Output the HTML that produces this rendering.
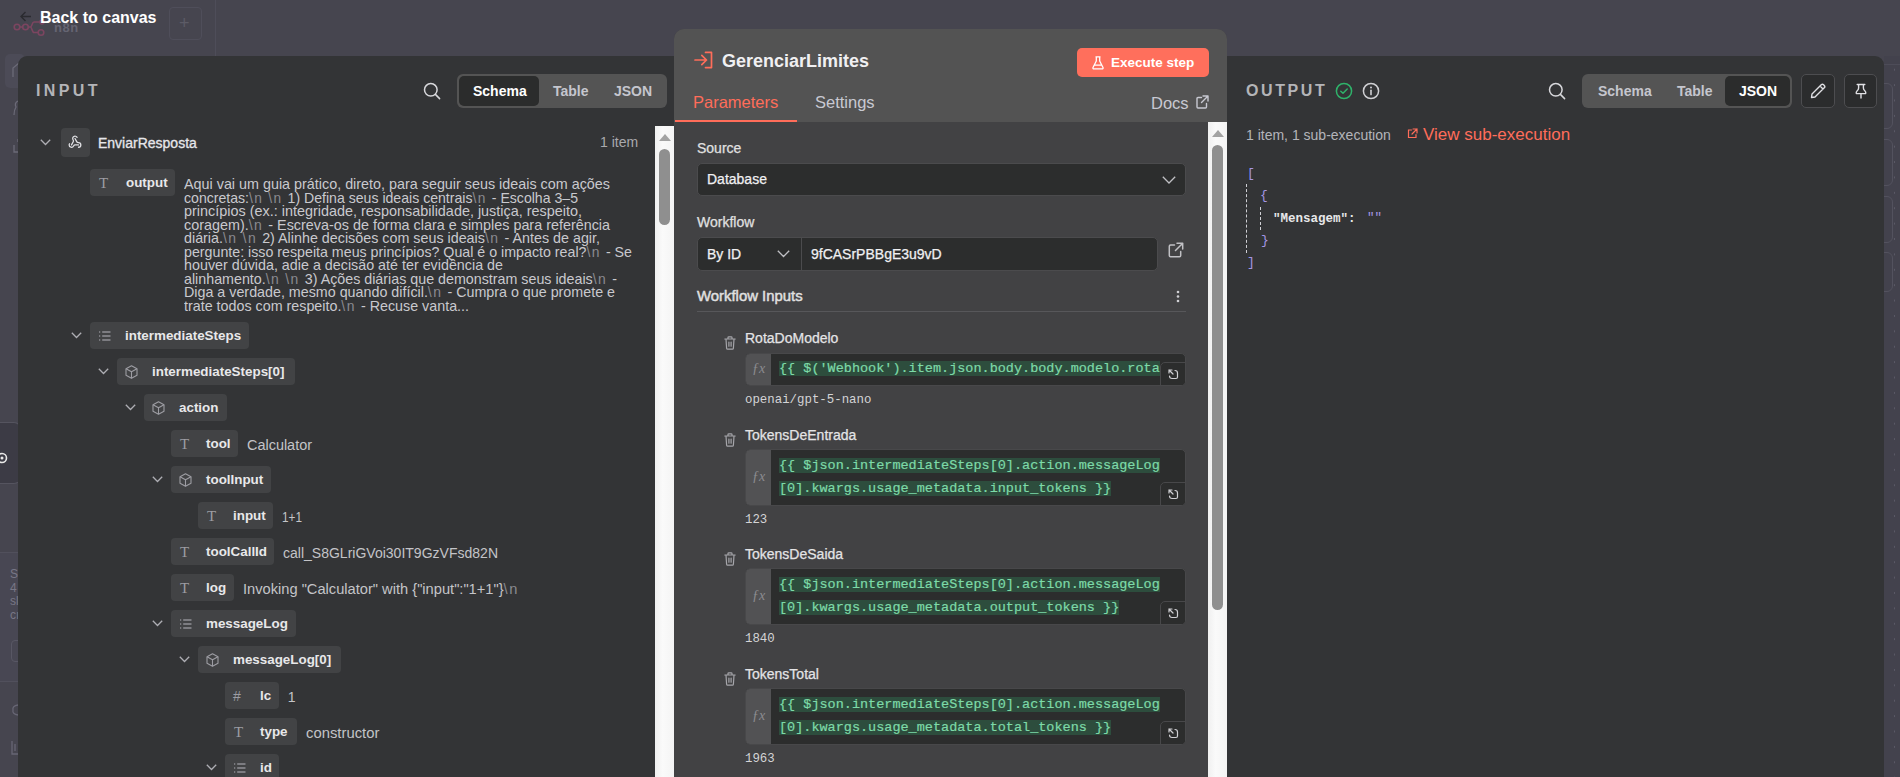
<!DOCTYPE html>
<html><head><meta charset="utf-8">
<style>
*{box-sizing:border-box;margin:0;padding:0}
html,body{width:1900px;height:777px;overflow:hidden;background:#46454f;font-family:"Liberation Sans",sans-serif;color:#e6e6e6}
.abs{position:absolute}
.t{position:absolute;white-space:pre;line-height:1}
#inp{position:absolute;left:18px;top:56px;width:656px;height:721px;background:#333436;border-top-left-radius:9px}
#out{position:absolute;left:1227px;top:56px;width:657px;height:721px;background:#333436;border-top-right-radius:9px}
#mid{position:absolute;left:674px;top:29px;width:553px;height:748px;background:#424244;border-top-left-radius:10px;border-top-right-radius:10px;overflow:hidden}
#midhead{position:absolute;left:0;top:0;width:553px;height:93px;background:#535353}
.sb{position:absolute;width:19px;background:linear-gradient(90deg,#f0f0f0,#fafafa 40%,#f4f4f4)}
.sb .arr{position:absolute;left:4px;top:8px;width:0;height:0;border-left:6px solid transparent;border-right:6px solid transparent;border-bottom:7px solid #a3a3a3}
.sb .th{position:absolute;left:4px;width:11px;background:#8f8f8f;border-radius:6px}
.seg{position:absolute;height:34px;background:#545454;border-radius:6px}
.seg .sel{position:absolute;top:2px;height:30px;background:#2b2c2c;border-radius:5px}
.seg .t{font-size:14px;color:#c5c6ce;font-weight:700}
.pill{position:absolute;height:27px;background:#424345;border-radius:4px}
.plbl{position:absolute;white-space:pre;line-height:1;font-size:13.4px;color:#e8e8ea;font-weight:700}
.val{position:absolute;white-space:pre;font-size:14px;color:#c4c4c8;line-height:1}
.nl{color:#8a8a90;letter-spacing:1.5px;font-size:14px;padding-right:1px}
.ltxt{position:absolute;left:184px;white-space:pre;font-size:14.4px;line-height:14px;color:#c9c9ce;transform-origin:0 0}
.lbl{position:absolute;white-space:pre;font-size:14px;color:#e0e0e0;line-height:1;-webkit-text-stroke:0.25px currentColor}
.inbox{position:absolute;background:#2c2d2d;border:1px solid #4b4b4d;border-radius:5px}
.expr{position:absolute;left:745px;width:441px;background:#2c2d2d;border:1px solid #48484a;border-radius:5px;overflow:hidden}
.expr .fx{position:absolute;left:-1px;top:-1px;bottom:-1px;width:26px;background:#525254}
.expr .fxt{position:absolute;left:7px;font-family:"Liberation Serif",serif;font-style:italic;font-size:14px;color:#8c8c90;line-height:1}
.expr .code{position:absolute;left:33px;top:3px;font-family:"Liberation Mono",monospace;font-size:13.5px;line-height:22.5px;color:#7ddaa8;white-space:pre;-webkit-text-stroke:0.2px #7ddaa8}
.expr .code span{background:#2d4d3d}
.expr .exp{position:absolute;right:-1px;bottom:-1px;width:26px;height:24px;border:1px solid #48484a;border-top-left-radius:5px;background:#2c2d2d}
.res{position:absolute;left:745px;font-family:"Liberation Mono",monospace;font-size:12.4px;color:#d4d4d6;white-space:pre;line-height:1}
.pname{position:absolute;left:745px;white-space:pre;font-size:14px;color:#e4e4e6;line-height:1;-webkit-text-stroke:0.25px currentColor}
</style></head><body>
<!-- TOP CANVAS BAR -->
<div class="abs" style="left:215px;top:0;width:1px;height:56px;background:#4e4d59"></div>
<div class="abs" style="left:169px;top:7px;width:33px;height:33px;border:1px solid #4f4e5a;border-radius:4px"></div>
<div class="t" style="left:179px;top:14px;font-size:18px;color:#5c5b66">+</div>
<svg class="abs" style="left:13px;top:20px" width="34" height="17" viewBox="0 0 34 17"><g fill="none" stroke="#7c4560" stroke-width="1.6"><circle cx="4" cy="7" r="2.8"/><circle cx="12.5" cy="7" r="2.8"/><circle cx="28" cy="12.5" r="2.8"/><circle cx="29" cy="2" r="2"/><path d="M6.8 7 H9.7 M15.3 7 H17.5 C19 7 19 2 21 2 H27 M17.5 7 C19 7 19 12.5 21 12.5 H25.2"/></g></svg>
<div class="t" style="left:54px;top:21px;font-size:13px;font-weight:700;color:#656472;letter-spacing:0.5px">n8n</div>
<svg class="abs" style="left:20px;top:11px" width="12" height="11" viewBox="0 0 12 11"><g fill="none" stroke="#2b2b30" stroke-width="1.4"><path d="M11 5.5 H1.5 M5.5 1 L1 5.5 L5.5 10"/></g></svg>
<div class="t" style="left:40px;top:10px;font-size:16px;font-weight:700;color:#fff">Back to canvas</div>
<!-- left sidebar faint -->
<div class="abs" style="left:0;top:422px;width:21px;height:62px;border:1px solid #55545f;border-left:none;border-radius:0 7px 7px 0;background:#3c3b45"></div>
<svg class="abs" style="left:-4px;top:452px" width="12" height="12" viewBox="0 0 12 12"><circle cx="6" cy="6" r="4.5" fill="none" stroke="#e8e8e8" stroke-width="1.6"/><circle cx="6" cy="6" r="1.5" fill="#e8e8e8"/></svg>
<!-- right faint canvas grid -->
<div class="abs" style="left:1884px;top:56px;width:16px;height:721px;background:#43424d"></div>
<div class="abs" style="left:1884px;top:64px;width:16px;height:1px;background:#4d4c58"></div>
<div class="abs" style="left:1893px;top:62px;width:3px;height:715px;background-image:radial-gradient(circle,#5a5966 0.9px,transparent 1.1px);background-size:3px 15.4px;background-position:0 0"></div>
<div class="abs" style="left:1870px;top:83px;width:23px;height:46px;border:1px solid #53525e;border-radius:6px"></div>
<div class="abs" style="left:1870px;top:139px;width:23px;height:47px;border:1px solid #53525e;border-radius:6px"></div>
<div class="abs" style="left:1870px;top:196px;width:23px;height:47px;border:1px solid #53525e;border-radius:6px"></div>
<div class="abs" style="left:1870px;top:252px;width:23px;height:40px;border:1px solid #53525e;border-radius:6px"></div>
<!-- left faint sidebar -->
<div class="abs" style="left:5px;top:54px;width:20px;height:34px;background:#4c4b57;border-radius:5px"></div>
<svg class="abs" style="left:12px;top:62px" width="8" height="16" viewBox="0 0 8 16"><path d="M1 15 V6 L7 1" fill="none" stroke="#6b6a77" stroke-width="1.3"/></svg>
<svg class="abs" style="left:13px;top:100px" width="6" height="16" viewBox="0 0 6 16"><path d="M5 1 Q1 3 3 7 Q1 10 1 15" fill="none" stroke="#6b6a77" stroke-width="1.3"/></svg>
<svg class="abs" style="left:13px;top:137px" width="6" height="16" viewBox="0 0 6 16"><path d="M5 2 V5 M1 8 V15 H6" fill="none" stroke="#6b6a77" stroke-width="1.3"/></svg>
<div class="abs" style="left:0;top:552px;width:18px;height:1px;background:#51505c"></div>
<div class="abs" style="left:0;top:553px;width:18px;height:128px;background:#484753"></div>
<div class="t" style="left:10px;top:568px;font-size:12px;line-height:13.7px;color:#787786">S<br>4<br>sl<br>cı</div>
<div class="abs" style="left:11px;top:640px;width:12px;height:22px;border:1px solid #585764;border-radius:4px"></div>
<div class="abs" style="left:0;top:681px;width:18px;height:1px;background:#51505c"></div>
<svg class="abs" style="left:11px;top:703px" width="8" height="14" viewBox="0 0 8 14"><path d="M7 2 Q1 3 2 7 Q1 11 7 12" fill="none" stroke="#676674" stroke-width="1.3"/></svg>
<svg class="abs" style="left:11px;top:740px" width="8" height="16" viewBox="0 0 8 16"><path d="M1 1 V14 H8 M4 4 V11" fill="none" stroke="#676674" stroke-width="1.3"/></svg>

<!-- INPUT PANEL -->
<div id="inp"></div>
<div class="t" style="left:36px;top:83px;font-size:16px;font-weight:700;color:#b4b4b8;letter-spacing:3.4px">INPUT</div>
<svg class="abs" style="left:423px;top:82px" width="18" height="18" viewBox="0 0 18 18"><g fill="none" stroke="#d8d8dc" stroke-width="1.5"><circle cx="7.8" cy="7.8" r="6.3"/><path d="M12.4 12.4 L16.6 16.6" stroke-linecap="round"/></g></svg>
<div class="seg" style="left:457px;top:74px;width:210px">
  <div class="sel" style="left:2px;width:80px"></div>
  <div class="t" style="left:16px;top:9.5px;color:#fff">Schema</div>
  <div class="t" style="left:96px;top:9.5px">Table</div>
  <div class="t" style="left:157px;top:9.5px">JSON</div>
</div>
<div class="val" style="left:600px;top:135px;color:#a9a9ad">1 item</div>

<svg class="abs" style="left:40px;top:139px" width="11" height="7" viewBox="0 0 11 7"><polyline points="0.8,0.8 5.5,5.5 10.2,0.8" fill="none" stroke="#aeaeb4" stroke-width="1.3"/></svg>
<div class="abs" style="left:61px;top:128px;width:29px;height:29px;background:#424345;border-radius:4px"></div>
<svg class="abs" style="left:68px;top:135px" width="14" height="14" viewBox="0 0 24 24"><g fill="none" stroke="#e0e0e4" stroke-width="2.2" stroke-linecap="round" stroke-linejoin="round"><path d="M18 16.98h-5.99c-1.1 0-1.95.94-2.48 1.9A4 4 0 0 1 2 17c.01-.7.2-1.4.57-2"/><path d="m6 17 3.13-5.78c.53-.97.1-2.18-.5-3.1a4 4 0 1 1 6.89-4.06"/><path d="m12 6 3.13 5.73C15.66 12.7 16.9 13 18 13a4 4 0 0 1 0 8"/></g></svg>
<div class="t" style="left:98px;top:135.5px;font-size:14px;color:#e6e6ea;-webkit-text-stroke:0.3px #e6e6ea">EnviarResposta</div>

<div class="pill" style="left:90px;top:169px;width:85px"></div>
<div class="t" style="left:99px;top:176px;font-family:'Liberation Serif',serif;font-size:15px;color:#9d9da3">T</div>
<div class="plbl" style="left:126px;top:176px">output</div>
<div class="ltxt" style="transform:scaleX(0.9973);top:177.0px">Aqui vai um guia prático, direto, para seguir seus ideais com ações</div>
<div class="ltxt" style="transform:scaleX(0.9795);top:190.5px">concretas:<span class="nl">\n</span> <span class="nl">\n</span> 1) Defina seus ideais centrais<span class="nl">\n</span> - Escolha 3–5</div>
<div class="ltxt" style="transform:scaleX(1.0011);top:204.0px">princípios (ex.: integridade, responsabilidade, justiça, respeito,</div>
<div class="ltxt" style="transform:scaleX(0.9982);top:217.5px">coragem).<span class="nl">\n</span> - Escreva-os de forma clara e simples para referência</div>
<div class="ltxt" style="transform:scaleX(0.9946);top:231.0px">diária.<span class="nl">\n</span> <span class="nl">\n</span> 2) Alinhe decisões com seus ideais<span class="nl">\n</span> - Antes de agir,</div>
<div class="ltxt" style="transform:scaleX(0.9885);top:244.5px">pergunte: isso respeita meus princípios? Qual é o impacto real?<span class="nl">\n</span> - Se</div>
<div class="ltxt" style="transform:scaleX(0.9944);top:258.0px">houver dúvida, adie a decisão até ter evidência de</div>
<div class="ltxt" style="transform:scaleX(0.9917);top:271.5px">alinhamento.<span class="nl">\n</span> <span class="nl">\n</span> 3) Ações diárias que demonstram seus ideais<span class="nl">\n</span> -</div>
<div class="ltxt" style="transform:scaleX(0.9930);top:285.0px">Diga a verdade, mesmo quando difícil.<span class="nl">\n</span> - Cumpra o que promete e</div>
<div class="ltxt" style="transform:scaleX(0.9936);top:298.5px">trate todos com respeito.<span class="nl">\n</span> - Recuse vanta...</div>

<svg class="abs" style="left:71px;top:332px" width="11" height="7" viewBox="0 0 11 7"><polyline points="0.8,0.8 5.5,5.5 10.2,0.8" fill="none" stroke="#aeaeb4" stroke-width="1.3"/></svg>
<div class="pill" style="left:90px;top:322px;width:159px"></div>
<svg class="abs" style="left:99px;top:331px" width="12" height="10" viewBox="0 0 12 10"><g stroke="#9d9da3" stroke-width="1.3"><line x1="3.2" y1="1" x2="11.5" y2="1"/><line x1="3.2" y1="5" x2="11.5" y2="5"/><line x1="3.2" y1="9" x2="11.5" y2="9"/><line x1="0.2" y1="1" x2="1.2" y2="1"/><line x1="0.2" y1="5" x2="1.2" y2="5"/><line x1="0.2" y1="9" x2="1.2" y2="9"/></g></svg>
<div class="plbl" style="left:125px;top:329px">intermediateSteps</div>
<svg class="abs" style="left:98px;top:368px" width="11" height="7" viewBox="0 0 11 7"><polyline points="0.8,0.8 5.5,5.5 10.2,0.8" fill="none" stroke="#aeaeb4" stroke-width="1.3"/></svg>
<div class="pill" style="left:117px;top:358px;width:178px"></div>
<svg class="abs" style="left:125px;top:365px" width="13" height="14" viewBox="0 0 13 14"><g fill="none" stroke="#9d9da3" stroke-width="1.1" stroke-linejoin="round"><path d="M6.5 0.8 L12 3.8 V10.2 L6.5 13.2 L1 10.2 V3.8 Z"/><path d="M1 3.8 L6.5 6.8 L12 3.8 M6.5 6.8 V13.2"/></g></svg>
<div class="plbl" style="left:152px;top:365px">intermediateSteps[0]</div>
<svg class="abs" style="left:125px;top:404px" width="11" height="7" viewBox="0 0 11 7"><polyline points="0.8,0.8 5.5,5.5 10.2,0.8" fill="none" stroke="#aeaeb4" stroke-width="1.3"/></svg>
<div class="pill" style="left:144px;top:394px;width:83px"></div>
<svg class="abs" style="left:152px;top:401px" width="13" height="14" viewBox="0 0 13 14"><g fill="none" stroke="#9d9da3" stroke-width="1.1" stroke-linejoin="round"><path d="M6.5 0.8 L12 3.8 V10.2 L6.5 13.2 L1 10.2 V3.8 Z"/><path d="M1 3.8 L6.5 6.8 L12 3.8 M6.5 6.8 V13.2"/></g></svg>
<div class="plbl" style="left:179px;top:401px">action</div>
<div class="pill" style="left:171px;top:430px;width:67px"></div>
<div class="t" style="left:180px;top:437px;font-family:'Liberation Serif',serif;font-size:15px;color:#9d9da3">T</div>
<div class="plbl" style="left:206px;top:437px">tool</div>
<div class="val" style="transform:scaleX(1.0312);transform-origin:0 0;left:246.8px;top:438.2px;">Calculator</div>
<svg class="abs" style="left:152px;top:476px" width="11" height="7" viewBox="0 0 11 7"><polyline points="0.8,0.8 5.5,5.5 10.2,0.8" fill="none" stroke="#aeaeb4" stroke-width="1.3"/></svg>
<div class="pill" style="left:171px;top:466px;width:100px"></div>
<svg class="abs" style="left:179px;top:473px" width="13" height="14" viewBox="0 0 13 14"><g fill="none" stroke="#9d9da3" stroke-width="1.1" stroke-linejoin="round"><path d="M6.5 0.8 L12 3.8 V10.2 L6.5 13.2 L1 10.2 V3.8 Z"/><path d="M1 3.8 L6.5 6.8 L12 3.8 M6.5 6.8 V13.2"/></g></svg>
<div class="plbl" style="left:206px;top:473px">toolInput</div>
<div class="pill" style="left:198px;top:502px;width:75px"></div>
<div class="t" style="left:207px;top:509px;font-family:'Liberation Serif',serif;font-size:15px;color:#9d9da3">T</div>
<div class="plbl" style="left:233px;top:509px">input</div>
<div class="val" style="transform:scaleX(0.8421);transform-origin:0 0;left:281.8px;top:510.2px;">1+1</div>
<div class="pill" style="left:171px;top:538px;width:103px"></div>
<div class="t" style="left:180px;top:545px;font-family:'Liberation Serif',serif;font-size:15px;color:#9d9da3">T</div>
<div class="plbl" style="left:206px;top:545px">toolCallId</div>
<div class="val" style="transform:scaleX(1.0011);transform-origin:0 0;left:282.8px;top:546.2px;">call_S8GLriGVoi30IT9GzVFsd82N</div>
<div class="pill" style="left:171px;top:574px;width:63px"></div>
<div class="t" style="left:180px;top:581px;font-family:'Liberation Serif',serif;font-size:15px;color:#9d9da3">T</div>
<div class="plbl" style="left:206px;top:581px">log</div>
<div class="val" style="transform:scaleX(1.0469);transform-origin:0 0;left:242.8px;top:582.2px;">Invoking "Calculator" with {"input":"1+1"}<span class="nl">\n</span></div>
<svg class="abs" style="left:152px;top:620px" width="11" height="7" viewBox="0 0 11 7"><polyline points="0.8,0.8 5.5,5.5 10.2,0.8" fill="none" stroke="#aeaeb4" stroke-width="1.3"/></svg>
<div class="pill" style="left:171px;top:610px;width:125px"></div>
<svg class="abs" style="left:180px;top:619px" width="12" height="10" viewBox="0 0 12 10"><g stroke="#9d9da3" stroke-width="1.3"><line x1="3.2" y1="1" x2="11.5" y2="1"/><line x1="3.2" y1="5" x2="11.5" y2="5"/><line x1="3.2" y1="9" x2="11.5" y2="9"/><line x1="0.2" y1="1" x2="1.2" y2="1"/><line x1="0.2" y1="5" x2="1.2" y2="5"/><line x1="0.2" y1="9" x2="1.2" y2="9"/></g></svg>
<div class="plbl" style="left:206px;top:617px">messageLog</div>
<svg class="abs" style="left:179px;top:656px" width="11" height="7" viewBox="0 0 11 7"><polyline points="0.8,0.8 5.5,5.5 10.2,0.8" fill="none" stroke="#aeaeb4" stroke-width="1.3"/></svg>
<div class="pill" style="left:198px;top:646px;width:143px"></div>
<svg class="abs" style="left:206px;top:653px" width="13" height="14" viewBox="0 0 13 14"><g fill="none" stroke="#9d9da3" stroke-width="1.1" stroke-linejoin="round"><path d="M6.5 0.8 L12 3.8 V10.2 L6.5 13.2 L1 10.2 V3.8 Z"/><path d="M1 3.8 L6.5 6.8 L12 3.8 M6.5 6.8 V13.2"/></g></svg>
<div class="plbl" style="left:233px;top:653px">messageLog[0]</div>
<div class="pill" style="left:225px;top:682px;width:54px"></div>
<div class="t" style="left:233px;top:689px;font-size:14px;color:#9d9da3">#</div>
<div class="plbl" style="left:260px;top:689px">lc</div>
<div class="val" style="left:287.8px;top:690.2px;">1</div>
<div class="pill" style="left:225px;top:718px;width:72px"></div>
<div class="t" style="left:234px;top:725px;font-family:'Liberation Serif',serif;font-size:15px;color:#9d9da3">T</div>
<div class="plbl" style="left:260px;top:725px">type</div>
<div class="val" style="transform:scaleX(1.0599);transform-origin:0 0;left:305.8px;top:726.2px;">constructor</div>
<svg class="abs" style="left:206px;top:764px" width="11" height="7" viewBox="0 0 11 7"><polyline points="0.8,0.8 5.5,5.5 10.2,0.8" fill="none" stroke="#aeaeb4" stroke-width="1.3"/></svg>
<div class="pill" style="left:225px;top:754px;width:54px"></div>
<svg class="abs" style="left:234px;top:763px" width="12" height="10" viewBox="0 0 12 10"><g stroke="#9d9da3" stroke-width="1.3"><line x1="3.2" y1="1" x2="11.5" y2="1"/><line x1="3.2" y1="5" x2="11.5" y2="5"/><line x1="3.2" y1="9" x2="11.5" y2="9"/><line x1="0.2" y1="1" x2="1.2" y2="1"/><line x1="0.2" y1="5" x2="1.2" y2="5"/><line x1="0.2" y1="9" x2="1.2" y2="9"/></g></svg>
<div class="plbl" style="left:260px;top:761px">id</div>

<div class="sb" style="left:655px;top:126px;height:651px"><div class="arr"></div><div class="th" style="top:23px;height:76px"></div></div>

<!-- MIDDLE PANEL -->
<div id="mid"><div id="midhead"></div>
  <div style="position:absolute;left:1px;top:91px;width:122px;height:2px;background:#ff6d5a"></div>
</div>
<svg class="abs" style="left:694px;top:51px" width="19" height="18" viewBox="0 0 19 18"><g fill="none" stroke="#ff6d5a" stroke-width="1.7" stroke-linecap="round" stroke-linejoin="round"><path d="M1 9 H12.5 M7.8 4.4 L12.5 9 L7.8 13.6 M11.5 1.4 H17.5 V16.6 H11.5"/></g></svg>
<div class="t" style="left:722px;top:52px;font-size:18px;font-weight:700;color:#f0f0f2">GerenciarLimites</div>
<div class="abs" style="left:1077px;top:48px;width:132px;height:29px;background:#ff6f5c;border-radius:5px"></div>
<svg class="abs" style="left:1092px;top:56px" width="12" height="14" viewBox="0 0 12 14"><g fill="none" stroke="#fff" stroke-width="1.3" stroke-linejoin="round"><path d="M3.5 0.8 H8.5 M4.3 0.8 V5 L1 11.5 Q0.6 12.9 2 12.9 H10 Q11.4 12.9 11 11.5 L7.7 5 V0.8 M2.2 9.2 H9.8"/></g></svg>
<div class="t" style="left:1111px;top:55.5px;font-size:13.5px;font-weight:700;color:#fff">Execute step</div>
<div class="t" style="left:693px;top:94px;font-size:16.5px;color:#ff6d5a">Parameters</div>
<div class="t" style="left:815px;top:94px;font-size:16.5px;color:#c8c9d2">Settings</div>
<div class="t" style="left:1151px;top:95px;font-size:16.5px;color:#c8c9d2">Docs</div>
<svg class="abs" style="left:1196px;top:95px" width="13" height="14" viewBox="0 0 13 14"><g fill="none" stroke="#c8c9d2" stroke-width="1.4" stroke-linecap="round" stroke-linejoin="round"><path d="M5.5 2.5 H2 Q1 2.5 1 3.5 V12 Q1 13 2 13 H9.5 Q10.5 13 10.5 12 V8.5 M7 1 H12 V6 M12 1 L5.5 7.5"/></g></svg>

<div class="lbl" style="left:697px;top:141px">Source</div>
<div class="inbox" style="left:697px;top:163px;width:489px;height:33px"></div>
<div class="lbl" style="left:707px;top:172px;color:#f0f0f2">Database</div>
<svg class="abs" style="left:1162px;top:176px" width="14" height="8" viewBox="0 0 14 8"><polyline points="0.8,0.8 7,7 13.2,0.8" fill="none" stroke="#c0c0c4" stroke-width="1.3"/></svg>

<div class="lbl" style="left:697px;top:215px">Workflow</div>
<div class="inbox" style="left:697px;top:237px;width:461px;height:34px"></div>
<div class="abs" style="left:801px;top:238px;width:1px;height:32px;background:#4b4b4d"></div>
<div class="lbl" style="left:707px;top:247px;color:#f0f0f2">By ID</div>
<svg class="abs" style="left:777px;top:250px" width="13" height="8" viewBox="0 0 13 8"><polyline points="0.8,0.8 6.5,6.5 12.2,0.8" fill="none" stroke="#c0c0c4" stroke-width="1.3"/></svg>
<div class="lbl" style="left:811px;top:247px;color:#f0f0f2">9fCASrPBBgE3u9vD</div>
<svg class="abs" style="left:1168px;top:242px" width="16" height="16" viewBox="0 0 16 16"><g fill="none" stroke="#c0c0c4" stroke-width="1.5" stroke-linecap="round" stroke-linejoin="round"><path d="M6.5 3 H2.5 Q1.3 3 1.3 4.2 V13.5 Q1.3 14.7 2.5 14.7 H11.5 Q12.7 14.7 12.7 13.5 V9.5 M9 1.3 H14.7 V7 M14.7 1.3 L7.5 8.5"/></g></svg>

<div class="lbl" style="left:697px;top:289px;font-size:14.9px;-webkit-text-stroke:0.45px #e0e0e0">Workflow Inputs</div>
<svg class="abs" style="left:1176px;top:290px" width="4" height="13" viewBox="0 0 4 13"><g fill="#d0d0d4"><circle cx="2" cy="2" r="1.3"/><circle cx="2" cy="6.5" r="1.3"/><circle cx="2" cy="11" r="1.3"/></g></svg>
<div class="abs" style="left:697px;top:311px;width:489px;height:1px;background:#57575a"></div>

<svg class="abs" style="left:724px;top:336px" width="12" height="14" viewBox="0 0 12 14"><g fill="none" stroke="#a5a5aa" stroke-width="1.2" stroke-linejoin="round" stroke-linecap="round"><path d="M0.8 3 H11.2 M4 3 V1.6 Q4 0.8 4.8 0.8 H7.2 Q8 0.8 8 1.6 V3 M2 3 L2.6 12.2 Q2.7 13.2 3.6 13.2 H8.4 Q9.3 13.2 9.4 12.2 L10 3 M4.9 6 V10.2 M7.1 6 V10.2"/></g></svg>
<div class="pname" style="top:331px">RotaDoModelo</div>
<div class="expr" style="top:353px;height:33px"><div class="fx"><div class="fxt" style="top:9px">ƒx</div></div>
<div class="code" style="top:4px"><span>{{ $('Webhook').item.json.body.body.modelo.rota</span></div>
<div class="exp"></div></div>
<svg class="abs" style="left:1168px;top:369px" width="11" height="11" viewBox="0 0 11 11"><g fill="none" stroke="#d0d0d4" stroke-width="1.2" stroke-linecap="round" stroke-linejoin="round"><path d="M1 4 V1 H4 M1 1 L5 5 M7 1.5 Q9.5 1.5 9.5 4 V8 Q9.5 9.5 8 9.5 H4 Q1.5 9.5 1.5 7"/></g></svg>
<div class="res" style="top:394px">openai/gpt-5-nano</div>
<svg class="abs" style="left:724px;top:433px" width="12" height="14" viewBox="0 0 12 14"><g fill="none" stroke="#a5a5aa" stroke-width="1.2" stroke-linejoin="round" stroke-linecap="round"><path d="M0.8 3 H11.2 M4 3 V1.6 Q4 0.8 4.8 0.8 H7.2 Q8 0.8 8 1.6 V3 M2 3 L2.6 12.2 Q2.7 13.2 3.6 13.2 H8.4 Q9.3 13.2 9.4 12.2 L10 3 M4.9 6 V10.2 M7.1 6 V10.2"/></g></svg>
<div class="pname" style="top:428px">TokensDeEntrada</div>
<div class="expr" style="top:449px;height:57px"><div class="fx"><div class="fxt" style="top:21px">ƒx</div></div>
<div class="code" style="top:5px"><span>{{ $json.intermediateSteps[0].action.messageLog</span>
<span>[0].kwargs.usage_metadata.input_tokens }}</span></div>
<div class="exp"></div></div>
<svg class="abs" style="left:1168px;top:489px" width="11" height="11" viewBox="0 0 11 11"><g fill="none" stroke="#d0d0d4" stroke-width="1.2" stroke-linecap="round" stroke-linejoin="round"><path d="M1 4 V1 H4 M1 1 L5 5 M7 1.5 Q9.5 1.5 9.5 4 V8 Q9.5 9.5 8 9.5 H4 Q1.5 9.5 1.5 7"/></g></svg>
<div class="res" style="top:514px">123</div>
<svg class="abs" style="left:724px;top:552px" width="12" height="14" viewBox="0 0 12 14"><g fill="none" stroke="#a5a5aa" stroke-width="1.2" stroke-linejoin="round" stroke-linecap="round"><path d="M0.8 3 H11.2 M4 3 V1.6 Q4 0.8 4.8 0.8 H7.2 Q8 0.8 8 1.6 V3 M2 3 L2.6 12.2 Q2.7 13.2 3.6 13.2 H8.4 Q9.3 13.2 9.4 12.2 L10 3 M4.9 6 V10.2 M7.1 6 V10.2"/></g></svg>
<div class="pname" style="top:547px">TokensDeSaida</div>
<div class="expr" style="top:568px;height:57px"><div class="fx"><div class="fxt" style="top:21px">ƒx</div></div>
<div class="code" style="top:5px"><span>{{ $json.intermediateSteps[0].action.messageLog</span>
<span>[0].kwargs.usage_metadata.output_tokens }}</span></div>
<div class="exp"></div></div>
<svg class="abs" style="left:1168px;top:608px" width="11" height="11" viewBox="0 0 11 11"><g fill="none" stroke="#d0d0d4" stroke-width="1.2" stroke-linecap="round" stroke-linejoin="round"><path d="M1 4 V1 H4 M1 1 L5 5 M7 1.5 Q9.5 1.5 9.5 4 V8 Q9.5 9.5 8 9.5 H4 Q1.5 9.5 1.5 7"/></g></svg>
<div class="res" style="top:633px">1840</div>
<svg class="abs" style="left:724px;top:672px" width="12" height="14" viewBox="0 0 12 14"><g fill="none" stroke="#a5a5aa" stroke-width="1.2" stroke-linejoin="round" stroke-linecap="round"><path d="M0.8 3 H11.2 M4 3 V1.6 Q4 0.8 4.8 0.8 H7.2 Q8 0.8 8 1.6 V3 M2 3 L2.6 12.2 Q2.7 13.2 3.6 13.2 H8.4 Q9.3 13.2 9.4 12.2 L10 3 M4.9 6 V10.2 M7.1 6 V10.2"/></g></svg>
<div class="pname" style="top:667px">TokensTotal</div>
<div class="expr" style="top:688px;height:57px"><div class="fx"><div class="fxt" style="top:21px">ƒx</div></div>
<div class="code" style="top:5px"><span>{{ $json.intermediateSteps[0].action.messageLog</span>
<span>[0].kwargs.usage_metadata.total_tokens }}</span></div>
<div class="exp"></div></div>
<svg class="abs" style="left:1168px;top:728px" width="11" height="11" viewBox="0 0 11 11"><g fill="none" stroke="#d0d0d4" stroke-width="1.2" stroke-linecap="round" stroke-linejoin="round"><path d="M1 4 V1 H4 M1 1 L5 5 M7 1.5 Q9.5 1.5 9.5 4 V8 Q9.5 9.5 8 9.5 H4 Q1.5 9.5 1.5 7"/></g></svg>
<div class="res" style="top:753px">1963</div>

<div class="sb" style="left:1208px;top:122px;height:655px"><div class="arr"></div><div class="th" style="top:23px;height:465px"></div></div>

<!-- OUTPUT PANEL -->
<div id="out"></div>
<div class="t" style="left:1246px;top:83px;font-size:16px;font-weight:700;color:#b4b4b8;letter-spacing:2.6px">OUTPUT</div>
<svg class="abs" style="left:1335px;top:82px" width="18" height="18" viewBox="0 0 18 18"><circle cx="9" cy="9" r="7.6" fill="none" stroke="#2fb26a" stroke-width="1.5"/><polyline points="5.8,9.2 8,11.2 12.2,7" fill="none" stroke="#2fb26a" stroke-width="1.5" stroke-linecap="round" stroke-linejoin="round"/></svg>
<svg class="abs" style="left:1362px;top:82px" width="18" height="18" viewBox="0 0 18 18"><circle cx="9" cy="9" r="7.6" fill="none" stroke="#d0d0d4" stroke-width="1.5"/><line x1="9" y1="8.2" x2="9" y2="12.6" stroke="#d0d0d4" stroke-width="1.6" stroke-linecap="round"/><circle cx="9" cy="5.6" r="1" fill="#d0d0d4"/></svg>
<svg class="abs" style="left:1548px;top:82px" width="18" height="18" viewBox="0 0 18 18"><g fill="none" stroke="#d8d8dc" stroke-width="1.5"><circle cx="7.8" cy="7.8" r="6.3"/><path d="M12.4 12.4 L16.6 16.6" stroke-linecap="round"/></g></svg>
<div class="seg" style="left:1582px;top:74px;width:210px">
  <div class="sel" style="left:143px;width:65px"></div>
  <div class="t" style="left:16px;top:9.5px">Schema</div>
  <div class="t" style="left:95px;top:9.5px">Table</div>
  <div class="t" style="left:157px;top:9.5px;color:#fff">JSON</div>
</div>
<div class="abs" style="left:1801px;top:74px;width:34px;height:34px;border:1px solid #4d4d50;border-radius:5px;background:#2b2c2d"></div>
<svg class="abs" style="left:1810px;top:83px" width="16" height="16" viewBox="0 0 16 16"><g fill="none" stroke="#e0e0e4" stroke-width="1.4" stroke-linejoin="round"><path d="M11.5 1.5 Q12.5 0.7 13.6 1.8 L14.2 2.4 Q15.3 3.5 14.5 4.5 L5 14 L1.5 14.5 L2 11 Z M10 3 L13 6"/></g></svg>
<div class="abs" style="left:1844px;top:74px;width:33px;height:34px;border:1px solid #4d4d50;border-radius:5px;background:#2b2c2d"></div>
<svg class="abs" style="left:1854px;top:83px" width="14" height="16" viewBox="0 0 14 16"><g fill="none" stroke="#e0e0e4" stroke-width="1.4" stroke-linejoin="round" stroke-linecap="round"><path d="M3.2 1.5 H10.8 M4.6 1.5 V5 Q4.6 6.6 3.2 7.8 Q1.8 9 2.3 10.6 H11.7 Q12.2 9 10.8 7.8 Q9.4 6.6 9.4 5 V1.5 M7 10.8 V15"/></g></svg>

<div class="val" style="left:1246px;top:128px;color:#b4b4bb">1 item, 1 sub-execution</div>
<svg class="abs" style="left:1407px;top:128px" width="11" height="11" viewBox="0 0 11 11"><g fill="none" stroke="#ff6d5a" stroke-width="1.2" stroke-linecap="round"><path d="M4.5 2 H1.5 V9.5 H9 V6.5 M6 1 H10 V5 M10 1 L5 6"/></g></svg>
<div class="t" style="left:1423px;top:126px;font-size:17px;color:#ff6d5a">View sub-execution</div>

<div class="t mono" style="left:1247px;top:167px;font-family:'Liberation Mono',monospace;font-size:13px;color:#a596e4">[</div>
<div class="t mono" style="left:1260px;top:189px;font-family:'Liberation Mono',monospace;font-size:13px;color:#a596e4">{</div>
<div class="t mono" style="left:1273px;top:212.5px;font-family:'Liberation Mono',monospace;font-size:12.5px;color:#e8e8ea;font-weight:700">"Mensagem":</div>
<div class="t mono" style="left:1367px;top:211.5px;font-family:'Liberation Mono',monospace;font-size:12.5px;color:#a596e4">""</div>
<div class="t mono" style="left:1261px;top:234px;font-family:'Liberation Mono',monospace;font-size:13px;color:#a596e4">}</div>
<div class="t mono" style="left:1247px;top:256px;font-family:'Liberation Mono',monospace;font-size:13px;color:#a596e4">]</div>
<div class="abs" style="left:1246px;top:184px;width:0;height:69px;border-left:1px dashed #cfcfd4"></div>
<div class="abs" style="left:1260px;top:207px;width:0;height:23px;border-left:1px dashed #cfcfd4"></div>
</body></html>
